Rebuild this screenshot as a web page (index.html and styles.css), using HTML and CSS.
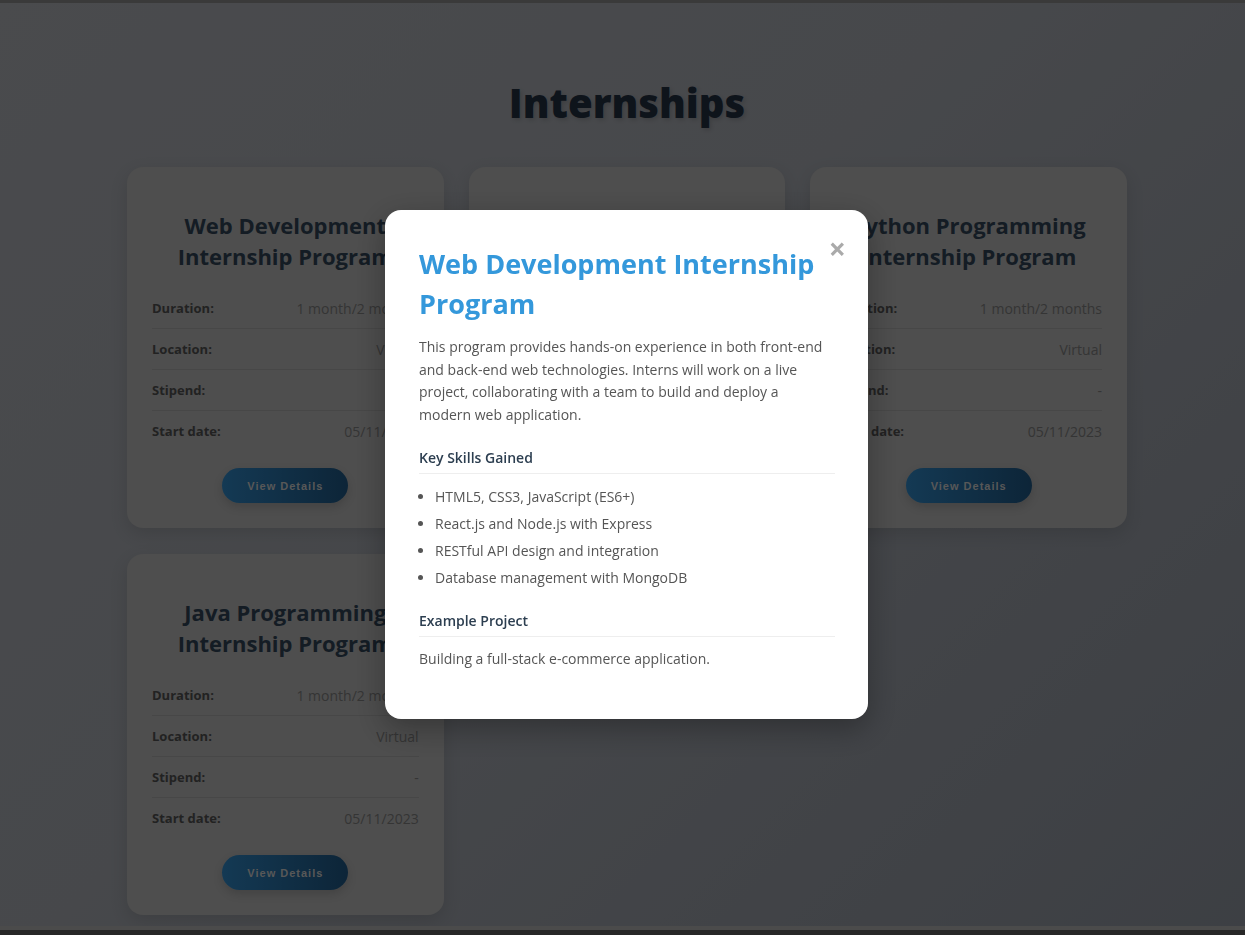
FILE: index.html
```html
<!DOCTYPE html>
<html lang="en">
<head>
<meta charset="utf-8">
<title>Internships</title>
<link rel="stylesheet" href="styles.css">
</head>
<body>
<div class="page">
  <div class="strip-top"></div>
  <main class="main">
    <h1 class="page-title">Internships</h1>
    <div class="grid">
      <article class="card">
        <h3 class="card-title">Web Development Internship Program</h3>
        <div class="rows">
          <div class="row"><span class="label">Duration:</span><span class="value">1 month/2 months</span></div>
          <div class="row"><span class="label">Location:</span><span class="value">Virtual</span></div>
          <div class="row"><span class="label">Stipend:</span><span class="value">-</span></div>
          <div class="row"><span class="label">Start date:</span><span class="value">05/11/2023</span></div>
        </div>
        <button class="btn">View Details</button>
      </article>
      <article class="card">
        <h3 class="card-title">Data Science Internship Program</h3>
        <div class="rows">
          <div class="row"><span class="label">Duration:</span><span class="value">1 month/2 months</span></div>
          <div class="row"><span class="label">Location:</span><span class="value">Virtual</span></div>
          <div class="row"><span class="label">Stipend:</span><span class="value">-</span></div>
          <div class="row"><span class="label">Start date:</span><span class="value">05/11/2023</span></div>
        </div>
        <button class="btn">View Details</button>
      </article>
      <article class="card">
        <h3 class="card-title">Python Programming Internship Program</h3>
        <div class="rows">
          <div class="row"><span class="label">Duration:</span><span class="value">1 month/2 months</span></div>
          <div class="row"><span class="label">Location:</span><span class="value">Virtual</span></div>
          <div class="row"><span class="label">Stipend:</span><span class="value">-</span></div>
          <div class="row"><span class="label">Start date:</span><span class="value">05/11/2023</span></div>
        </div>
        <button class="btn">View Details</button>
      </article>
      <article class="card">
        <h3 class="card-title">Java Programming Internship Program</h3>
        <div class="rows">
          <div class="row"><span class="label">Duration:</span><span class="value">1 month/2 months</span></div>
          <div class="row"><span class="label">Location:</span><span class="value">Virtual</span></div>
          <div class="row"><span class="label">Stipend:</span><span class="value">-</span></div>
          <div class="row"><span class="label">Start date:</span><span class="value">05/11/2023</span></div>
        </div>
        <button class="btn">View Details</button>
      </article>
    </div>
  </main>
  <div class="strip-bottom"></div>
  <div class="strip-base"></div>
</div>

<div class="backdrop">
  <div class="modal">
    <span class="close">&times;</span>
    <h2 class="modal-title">Web Development Internship Program</h2>
    <p class="modal-text intro">This program provides hands-on experience in both front-end and back-end web technologies. Interns will work on a live project, collaborating with a team to build and deploy a modern web application.</p>
    <h4 class="modal-sub">Key Skills Gained</h4>
    <ul class="skills">
      <li>HTML5, CSS3, JavaScript (ES6+)</li>
      <li>React.js and Node.js with Express</li>
      <li>RESTful API design and integration</li>
      <li>Database management with MongoDB</li>
    </ul>
    <h4 class="modal-sub">Example Project</h4>
    <p class="modal-text">Building a full-stack e-commerce application.</p>
  </div>
</div>
</body>
</html>
```

FILE: styles.css
```css
* { box-sizing: border-box; }

html, body {
  margin: 0;
  height: 100%;
}

body {
  font-family: "Open Sans", "DejaVu Sans", sans-serif;
  overflow: hidden;
}

.page {
  height: 935px;
  display: flex;
  flex-direction: column;
  background: linear-gradient(135deg, #94969b 0%, #8e9197 45%, #7a7f88 100%);
}

.strip-top {
  height: 3px;
  background: #747474;
  flex: none;
}

.strip-bottom {
  height: 4px;
  background: #969696;
  flex: none;
}

.strip-base {
  height: 5px;
  background: #4e4e4e;
  flex: none;
}

.main {
  flex: 1;
  padding: 76px 0 0 9px;
  overflow: hidden;
}

.page-title {
  margin: 0 0 40px;
  text-align: center;
  font-size: 40px;
  line-height: 48px;
  font-weight: 800;
  color: #1c2836;
  text-shadow: 2px 2px 4px rgba(0, 0, 0, 0.15);
}

.grid {
  width: 1000px;
  margin: 0 auto;
  display: grid;
  grid-template-columns: repeat(3, 1fr);
  gap: 26px 25px;
}

.card {
  background: #9c9c9c;
  border-radius: 16px;
  padding: 43px 25px 25px;
  box-shadow: 0 6px 18px rgba(0, 0, 0, 0.12);
  display: flex;
  flex-direction: column;
  align-items: center;
}

.card-title {
  margin: 0 0 16px;
  text-align: center;
  font-size: 22px;
  line-height: 31px;
  font-weight: 700;
  color: #283848;
}

.rows {
  align-self: stretch;
}

.row {
  display: flex;
  justify-content: space-between;
  align-items: center;
  height: 41px;
  font-size: 13px;
  border-bottom: 1px solid rgba(0, 0, 0, 0.08);
}

.row:last-child {
  border-bottom: none;
  height: 40px;
}

.label {
  font-weight: 700;
  color: #444;
}

.value {
  font-size: 14px;
  font-weight: 400;
  color: #6a6a6a;
}

.btn {
  margin-top: 17px;
  width: 126px;
  height: 35px;
  border: none;
  border-radius: 18px;
  background: linear-gradient(90deg, #2873a8 0%, #1a4a70 100%);
  color: #b0b0b0;
  font-family: "Liberation Sans", Arial, sans-serif;
  font-weight: 700;
  font-size: 11px;
  letter-spacing: 1px;
  box-shadow: 0 4px 10px rgba(0, 0, 0, 0.15);
}

.backdrop {
  position: fixed;
  inset: 0;
  background: rgba(0, 0, 0, 0.5);
  display: flex;
  align-items: flex-start;
  justify-content: center;
  padding: 210px 0 0 8px;
}

.modal {
  position: relative;
  width: 483px;
  background: #fff;
  border-radius: 16px;
  padding: 34px 33px 48px 34px;
  box-shadow: 0 10px 30px rgba(0, 0, 0, 0.3);
}

.close {
  position: absolute;
  top: 24px;
  right: 22px;
  font-size: 30px;
  line-height: 30px;
  font-weight: 700;
  color: #aaa;
}

.modal-title {
  margin: 0 0 12px;
  font-size: 27px;
  line-height: 40px;
  font-weight: 700;
  color: #3498db;
}

.modal-text {
  margin: 0;
  font-size: 14px;
  line-height: 22.5px;
  color: #555;
}

.modal-text.intro {
  padding-right: 10px;
}

.modal-sub {
  margin: 22px 0 0;
  padding-bottom: 5px;
  border-bottom: 1px solid #eee;
  font-size: 14px;
  line-height: 20px;
  font-weight: 600;
  color: #2c3e50;
}

.modal-sub + .modal-text {
  margin-top: 11px;
}

.skills {
  margin: 12px 0 0;
  padding-left: 16px;
  font-size: 14px;
  line-height: 22px;
  color: #555;
}

.skills li {
  margin-bottom: 5px;
}
```
